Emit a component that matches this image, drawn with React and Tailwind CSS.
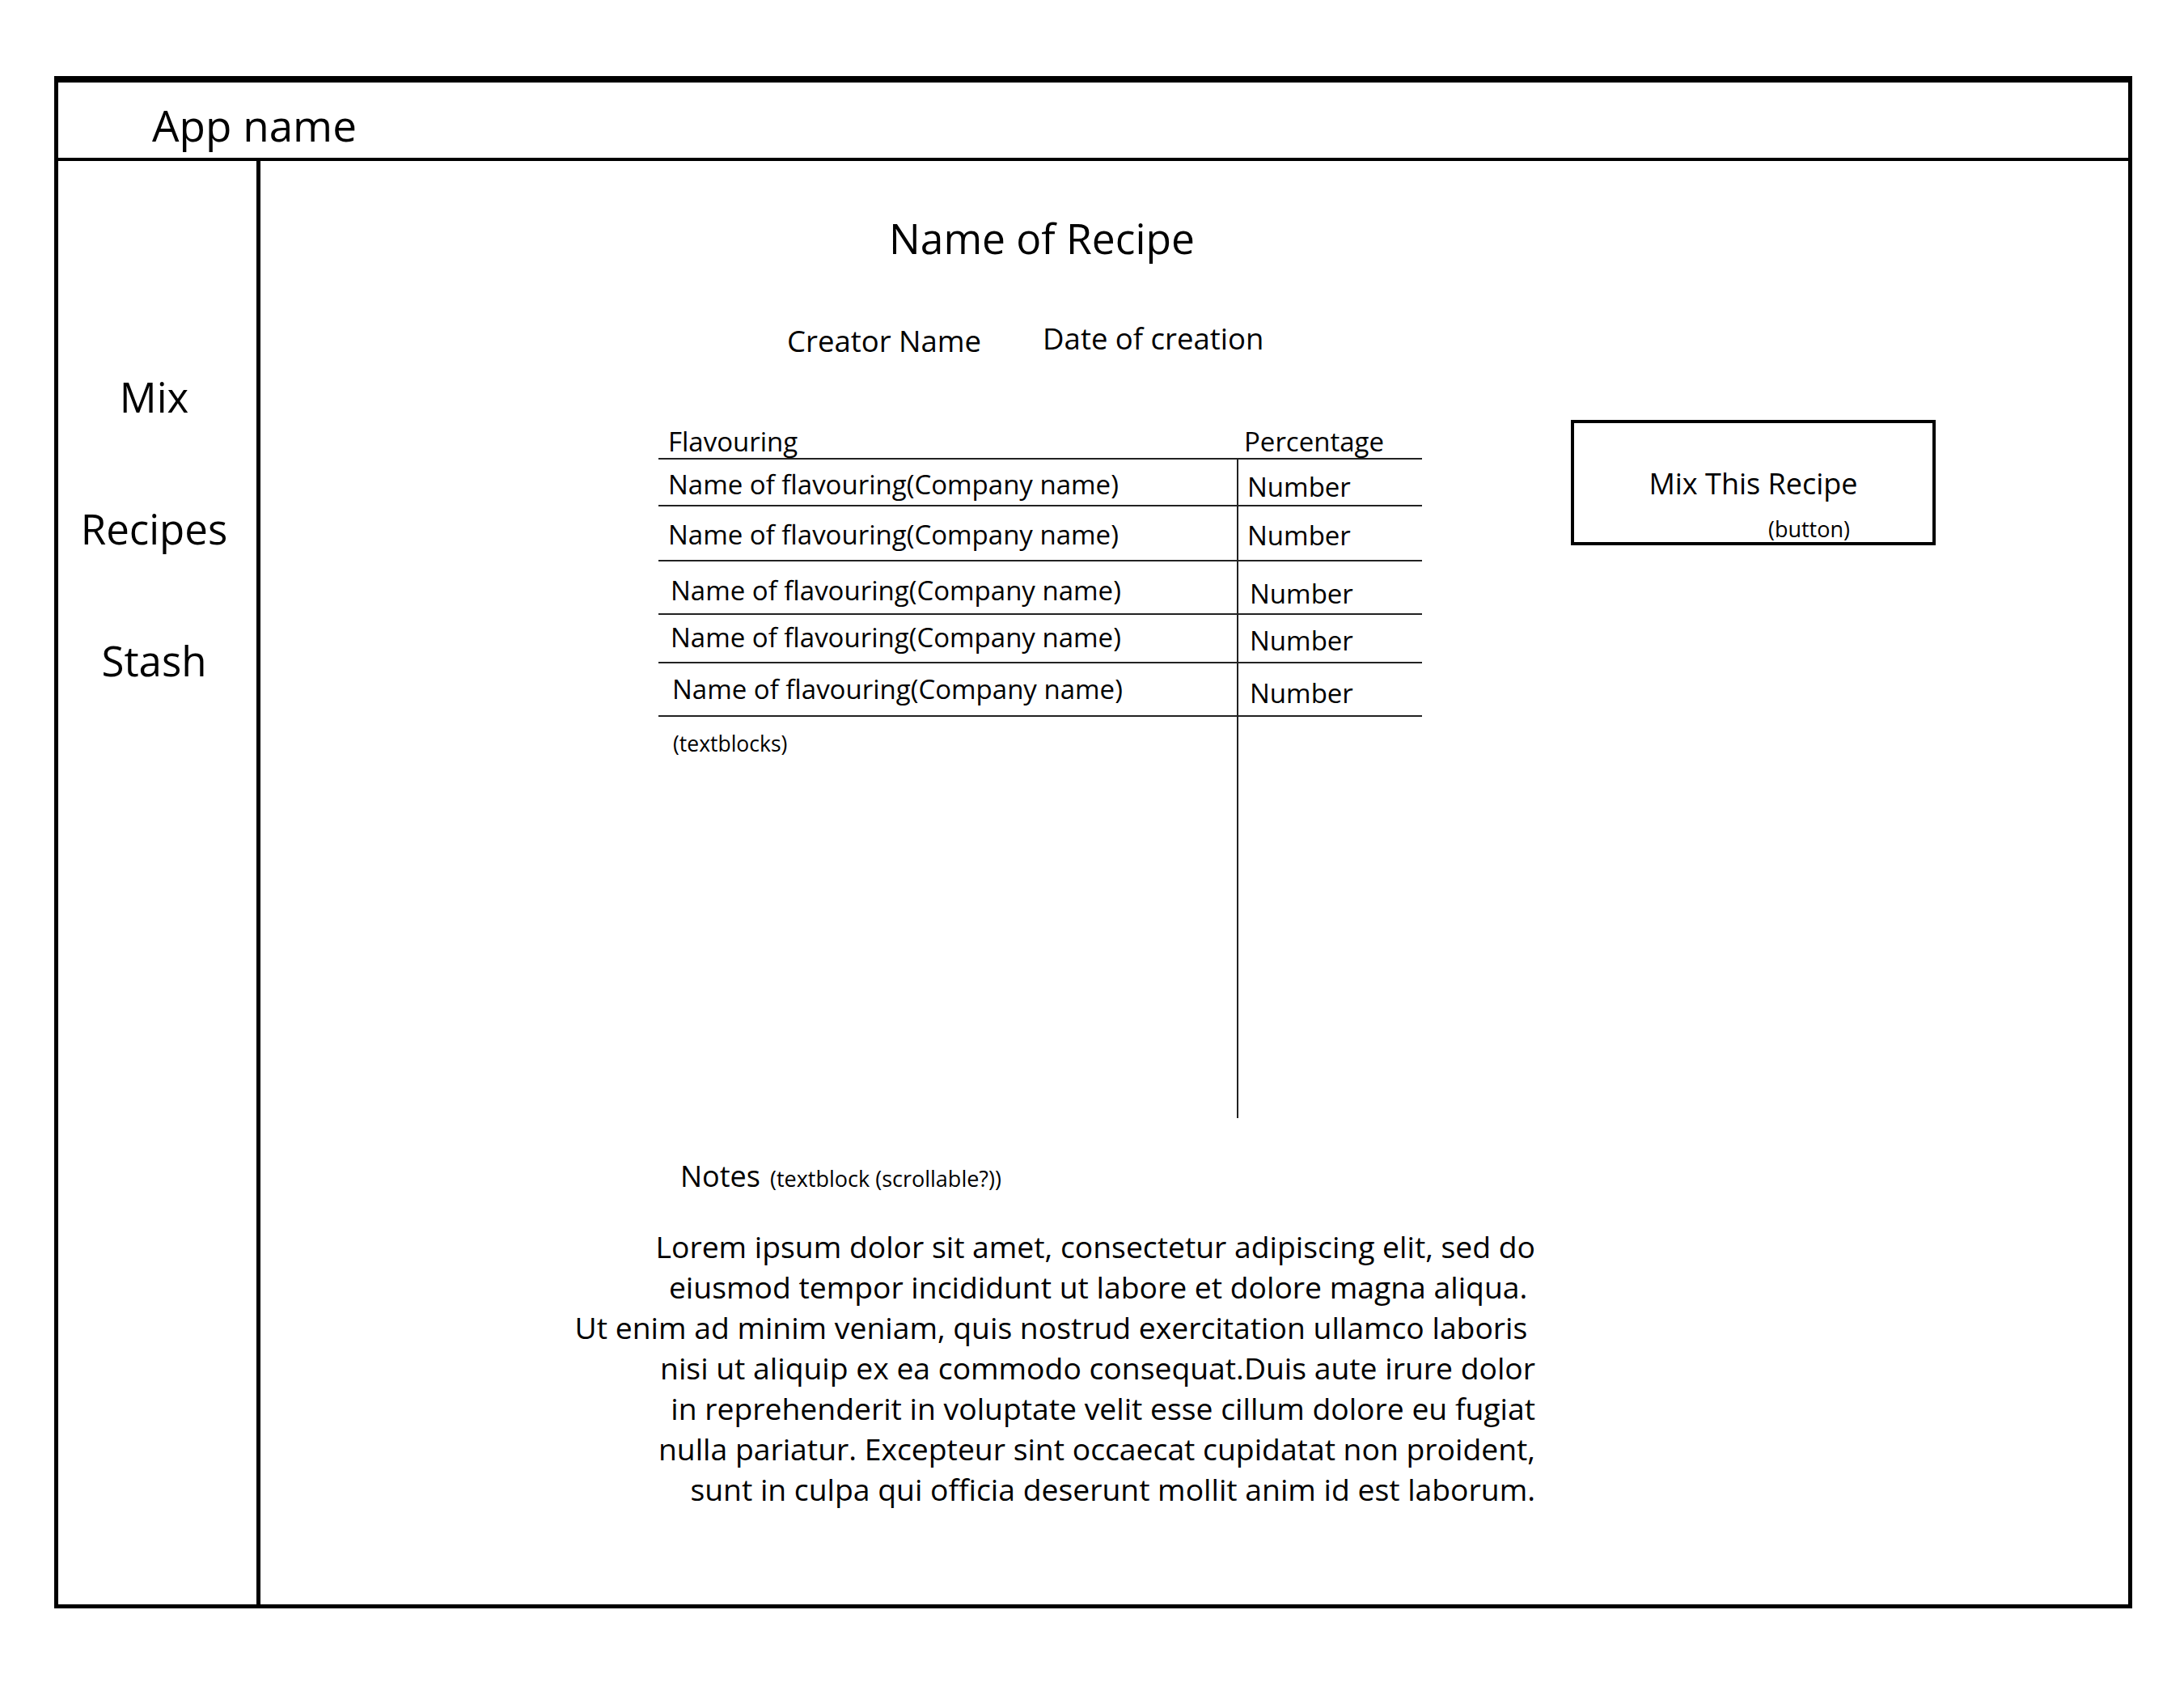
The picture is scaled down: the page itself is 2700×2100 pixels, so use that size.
export default function App() {
  const rows = [
    { h: "h-[58px]", pl: "pl-[12px]", pb1: "pb-[9px]", pb2: "pb-[6px]", pl2: "pl-[11px]" },
    { h: "h-[68px]", pl: "pl-[12px]", pb1: "pb-[15px]", pb2: "pb-[14px]", pl2: "pl-[11px]" },
    { h: "h-[66px]", pl: "pl-[15px]", pb1: "pb-[12px]", pb2: "pb-[8px]", pl2: "pl-[14px]" },
    { h: "h-[60px]", pl: "pl-[15px]", pb1: "pb-[14px]", pb2: "pb-[10px]", pl2: "pl-[14px]" },
    { h: "h-[66px]", pl: "pl-[17px]", pb1: "pb-[16px]", pb2: "pb-[11px]", pl2: "pl-[14px]" },
  ];
  const lorem = [
    "Lorem ipsum dolor sit amet, consectetur adipiscing elit, sed do",
    "eiusmod tempor incididunt ut labore et dolore magna aliqua.\u00a0",
    "Ut enim ad minim veniam, quis nostrud exercitation ullamco laboris\u00a0",
    "nisi ut aliquip ex ea commodo consequat.Duis aute irure dolor",
    "in reprehenderit in voluptate velit esse cillum dolore eu fugiat",
    "nulla pariatur. Excepteur sint occaecat cupidatat non proident,",
    "sunt in culpa qui officia deserunt mollit anim id est laborum.",
  ];
  return (
    <div className="w-[2700px] h-[2100px] bg-white text-black font-['Open_Sans',sans-serif] pt-[94px] pl-[67px]">
      <div className="w-[2569px] h-[1894px] border-t-[8px] border-l-[5px] border-r-[5px] border-b-[5px] border-black flex flex-col">
        {/* Header */}
        <div className="h-[97px] shrink-0 border-b-[4px] border-black pl-[116px] pt-[26px]">
          <div className="text-[53px] leading-none">App name</div>
        </div>
        <div className="flex flex-1">
          {/* Sidebar */}
          <div className="w-[250px] shrink-0 border-r-[5px] border-black flex flex-col items-center pr-[8px] pt-[266px] gap-[112px] text-[51px] leading-none">
            <div>Mix</div>
            <div>Recipes</div>
            <div>Stash</div>
          </div>
          {/* Main */}
          <div className="flex-1 flex flex-col pt-[70px]">
            <div className="ml-[777px] text-[51.5px] leading-none">Name of Recipe</div>
            <div className="ml-[651px] mt-[79px] flex items-end text-[36.5px] leading-none">
              <span>Creator Name</span>
              <span className="ml-[76px] mb-[3px]">Date of creation</span>
            </div>
            <div className="ml-[492px] mt-[82px] flex items-start">
              {/* Table */}
              <div className="w-[944px] flex flex-col text-[33px] leading-none">
                <div className="h-[47px] flex border-b-2 border-[#222]">
                  <div className="w-[715px] flex items-end pl-[12px] pb-[4px]">Flavouring</div>
                  <div className="flex-1 flex items-end pl-[9px] pb-[4px]">Percentage</div>
                </div>
                {rows.map((r, i) => (
                  <div key={i} className={`${r.h} flex border-b-2 border-[#222]`}>
                    <div className={`w-[715px] flex items-end ${r.pl} ${r.pb1}`}>
                      Name of flavouring(Company name)
                    </div>
                    <div className={`flex-1 flex items-end border-l-2 border-[#222] ${r.pl2} ${r.pb2}`}>
                      Number
                    </div>
                  </div>
                ))}
                <div className="h-[496px] flex">
                  <div className="w-[715px] pl-[18px] pt-[20px] text-[26.5px] leading-none">(textblocks)</div>
                  <div className="flex-1 border-l-2 border-[#222]"></div>
                </div>
              </div>
              {/* Button */}
              <div className="ml-[184px] -mt-[2px] w-[451px] h-[155px] border-[4px] border-black flex flex-col">
                <div className="mt-[57px] text-[36px] leading-none text-center">Mix This Recipe</div>
                <div className="mt-[24px] self-end mr-[102px] text-[27px] leading-none">(button)</div>
              </div>
            </div>
            {/* Notes */}
            <div className="ml-[519px] mt-[54px] flex items-baseline">
              <span className="text-[36px] leading-none">Notes</span>
              <span className="ml-[12px] text-[27px] leading-none">(textblock (scrollable?))</span>
            </div>
            <div className="mt-[44px] w-[1576px] text-right text-[37.3px] leading-[50px]">
              {lorem.map((l, i) => (
                <div key={i}>{l}</div>
              ))}
            </div>
          </div>
        </div>
      </div>
    </div>
  );
}
